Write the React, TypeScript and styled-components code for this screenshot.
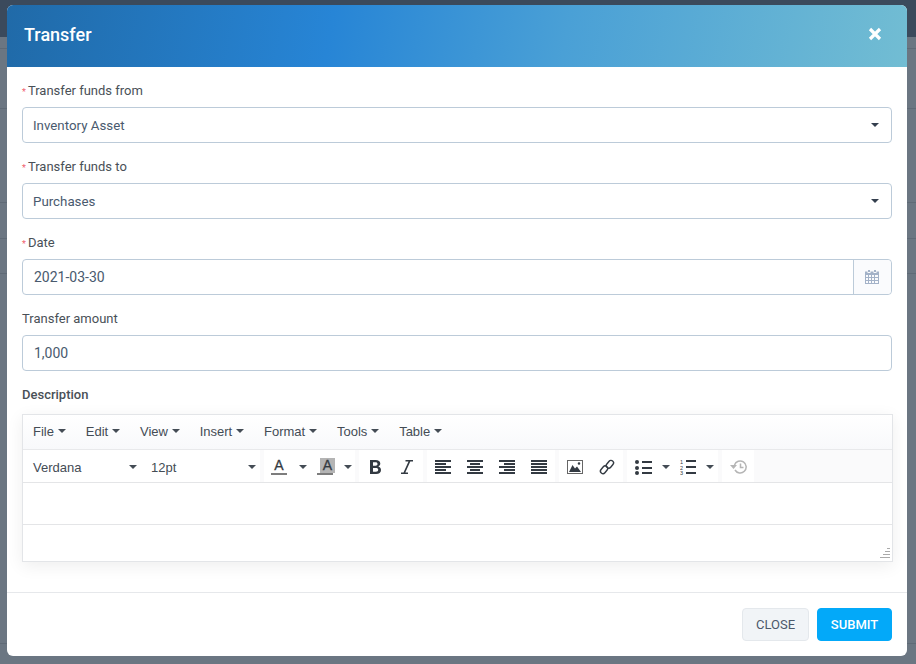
import React from 'react';
import styled, { createGlobalStyle } from 'styled-components';

const Global = createGlobalStyle`
  html, body { margin: 0; padding: 0; height: 100%; }
  body { font-family: Roboto, "Liberation Sans", sans-serif; background: #6b7682; overflow: hidden; }
`;

const Page = styled.div`
  position: relative;
  width: 916px;
  height: 664px;
  overflow: hidden;
`;

const TopBar = styled.div`
  height: 37px;
  background: #3b4a5c;
`;

const BackRow = styled.div<{ $h: number }>`
  height: ${p => p.$h}px;
  box-sizing: border-box;
  border-bottom: 1px solid #5f6a76;
  background: #6b7682;
`;

const Modal = styled.div`
  position: absolute;
  left: 7px;
  top: 5px;
  width: 900px;
  height: 651px;
  background: #fff;
  border-radius: 6px;
  overflow: hidden;
  display: flex;
  flex-direction: column;
`;

const Header = styled.div`
  height: 62px;
  flex: none;
  display: flex;
  align-items: center;
  justify-content: space-between;
  padding: 0 25px 4px 17px;
  box-sizing: border-box;
  background: linear-gradient(100deg, #206aa8 0%, #2785d6 36%, #4aa0d6 62%, #72bdd3 100%);
`;

const Title = styled.h2`
  margin: 0;
  font-size: 18px;
  font-weight: 500;
  color: #fff;
`;

const Body = styled.div`
  flex: 1;
  padding: 15px 15px 0;
  display: flex;
  flex-direction: column;
`;

const Field = styled.div`
  height: 76px;
  flex: none;
`;

const Label = styled.div<{ $bold?: boolean }>`
  height: 25px;
  padding-top: 1px;
  box-sizing: border-box;
  font-size: 13px;
  line-height: 16px;
  color: #495057;
  font-weight: ${p => (p.$bold ? 500 : 400)};
`;

const Star = styled.span`
  color: #f0616e;
  font-size: 9px;
  margin-right: 2px;
`;

const Control = styled.div<{ $pad?: number; $size?: number }>`
  width: 870px;
  height: 36px;
  box-sizing: border-box;
  border: 1px solid #bccbd9;
  border-radius: 4px;
  display: flex;
  align-items: center;
  justify-content: space-between;
  padding-left: ${p => p.$pad ?? 10}px;
  font-size: ${p => p.$size ?? 13.3}px;
  color: #495a6e;
  background: #fff;
`;

const SelectCaret = styled.span`
  width: 0;
  height: 0;
  margin-right: 12px;
  border-left: 4px solid transparent;
  border-right: 4px solid transparent;
  border-top: 4px solid #343f4e;
`;

const Addon = styled.div`
  width: 38px;
  height: 34px;
  box-sizing: border-box;
  padding-right: 1px;
  border-left: 1px solid #bccbd9;
  border-radius: 0 4px 4px 0;
  background: #fafbfd;
  display: flex;
  align-items: center;
  justify-content: center;
`;

const Editor = styled.div`
  width: 871px;
  height: 148px;
  box-sizing: border-box;
  border: 1px solid #e3e5e8;
  box-shadow: 0 4px 16px rgba(0, 0, 0, 0.07);
  display: flex;
  flex-direction: column;
  background: #fff;
  margin-top: 3px;
  font-family: "Liberation Sans", Arial, sans-serif;
`;

const MenuBar = styled.div`
  height: 35px;
  flex: none;
  box-sizing: border-box;
  display: flex;
  align-items: center;
  padding: 0 0 2px 10px;
  gap: 19.8px;
  border-bottom: 1px solid #e8e9eb;
  background: linear-gradient(#fff, #f8f9fb);
  font-size: 13px;
  color: #444c55;
`;

const MenuItem = styled.span`
  display: inline-flex;
  align-items: center;
  gap: 4px;
`;

const SmallCaret = styled.span`
  width: 0;
  height: 0;
  border-left: 4px solid transparent;
  border-right: 4px solid transparent;
  border-top: 4px solid #444c55;
`;

const ToolBar = styled.div`
  height: 33px;
  flex: none;
  box-sizing: border-box;
  display: flex;
  gap: 4px;
  border-bottom: 1px solid #e4e5e7;
  background: #fafafb;
`;

const Group = styled.div<{ $end?: number }>`
  display: flex;
  height: 32px;
  align-items: center;
  padding-right: ${p => p.$end ?? 0}px;
  background: #fff;
`;

const FontPick = styled.div<{ $w: number }>`
  width: ${p => p.$w}px;
  height: 32px;
  box-sizing: border-box;
  padding: 2px 4px 0 10px;
  display: flex;
  align-items: center;
  justify-content: space-between;
  font-size: 13px;
  color: #444c55;
`;

const Tool = styled.div<{ $w?: number }>`
  width: ${p => p.$w ?? 32}px;
  height: 32px;
  box-sizing: border-box;
  padding-top: 2px;
  display: flex;
  align-items: center;
  justify-content: center;
  flex: none;
`;

const EditArea = styled.div`
  height: 41px;
  flex: none;
  border-bottom: 1px solid #e4e5e7;
`;

const StatusBar = styled.div`
  flex: 1;
  display: flex;
  align-items: flex-end;
  justify-content: flex-end;
  padding: 0 2px 3px 0;
  background: #fff;
`;

const Footer = styled.div`
  height: 64px;
  flex: none;
  box-sizing: border-box;
  border-top: 1px solid #e6e8eb;
  display: flex;
  justify-content: flex-end;
  align-items: flex-start;
  gap: 8px;
  padding: 15px 15px 0 0;
`;

const Btn = styled.button<{ $primary?: boolean }>`
  height: 33px;
  width: ${p => (p.$primary ? 75 : 67)}px;
  box-sizing: border-box;
  border-radius: 4px;
  padding: 0;
  font-family: Roboto, sans-serif;
  font-size: 13px;
  font-weight: ${p => (p.$primary ? 500 : 400)};
  border: 1px solid ${p => (p.$primary ? '#03a9f9' : '#e4e8ec')};
  background: ${p => (p.$primary ? '#03a9f9' : '#f1f4f7')};
  color: ${p => (p.$primary ? '#fff' : '#4c596b')};
`;

const InkIcon = styled.svg`
  display: block;
  fill: #333a42;
`;

const Close = () => (
  <svg width="14" height="14" viewBox="0 0 14 14">
    <path d="M2 2l10 10M12 2L2 12" stroke="#fff" strokeWidth="3.2" />
  </svg>
);

const Calendar = () => (
  <svg width="14" height="14" viewBox="0 0 14 14" fill="#a3b2c8">
    <path d="M3 0h2v2H3zM9 0h2v2H9z" />
    <path fillRule="evenodd" d="M0 1.500h2.500V3h3V1.500h3V3h3V1.500H14V14H0zM1 5v2h2V5zm3 0v2h2V5zm3 0v2h2V5zm3 0v2h3V5zM1 8v2h2V8zm3 0v2h2V8zm3 0v2h2V8zm3 0v2h3V8zM1 11v2h2v-2zm3 0v2h2v-2zm3 0v2h2v-2zm3 0v2h3v-2z" />
  </svg>
);

const TextColor = () => (
  <svg width="16" height="18" viewBox="0 0 16 18">
    <text x="8" y="12" textAnchor="middle" fontFamily="Liberation Sans, sans-serif" fontSize="14" fill="#333a42" stroke="#333a42" strokeWidth="0.3">A</text>
    <rect x="0" y="15" width="16" height="2" fill="#7d7d7d" />
  </svg>
);

const BackColor = () => (
  <svg width="18" height="18" viewBox="0 0 18 18">
    <rect x="3" y="0" width="15" height="15" fill="#b4b4b4" />
    <text x="10.500" y="12" textAnchor="middle" fontFamily="Liberation Sans, sans-serif" fontSize="14" fill="#333a42" stroke="#333a42" strokeWidth="0.3">A</text>
    <rect x="0" y="15" width="16" height="2" fill="#7d7d7d" />
  </svg>
);

const Bold = () => (
  <InkIcon width="11" height="14" viewBox="0 0 11 14">
    <path fillRule="evenodd" d="M0 0h5.500C8.500 0 10.300 1.300 10.300 3.500c0 1.400-.8 2.500-2 3 1.600.4 2.700 1.600 2.700 3.500 0 2.500-1.900 4-4.800 4H0zM3 2.300v3.400h2.500c1.300 0 2-.6 2-1.700s-.7-1.700-2-1.700zM3 8v3.700h3c1.400 0 2.200-.7 2.200-1.900S7.400 8 6 8z" />
  </InkIcon>
);

const Italic = () => (
  <InkIcon width="12" height="14" viewBox="0 0 12 14">
    <path d="M4.500 0H12v1.500H9.300L4.300 12.500H7V14H0v-1.500h2.500L7.500 1.500H4.500z" />
  </InkIcon>
);

const aligns: Record<string, number[][]> = {
  left: [[0, 16], [0, 11], [0, 16], [0, 11], [0, 16]],
  center: [[0, 16], [3, 10], [0, 16], [3, 10], [0, 16]],
  right: [[0, 16], [5, 11], [0, 16], [5, 11], [0, 16]],
  justify: [[0, 16], [0, 16], [0, 16], [0, 16], [0, 16]],
};

const Align = ({ kind }: { kind: string }) => (
  <InkIcon width="16" height="14" viewBox="0 0 16 14">
    {aligns[kind].map(([x, w], i) => (
      <rect key={i} x={x} y={i * 3} width={w} height="2" />
    ))}
  </InkIcon>
);

const ImageIcon = () => (
  <InkIcon width="16" height="14" viewBox="0 0 16 14">
    <path fillRule="evenodd" d="M0 0h16v14H0zm1 1v12h14V1z" fill="#666" />
    <path d="M2 12l3.500-7 2.500 3.500 2-2 4 5.500zM12 2.200a1.300 1.300 0 1 1 0 2.600 1.300 1.300 0 0 1 0-2.600z" />
  </InkIcon>
);

const LinkIcon = () => (
  <svg width="16" height="16" viewBox="0 0 16 16" fill="none" stroke="#333a42" strokeWidth="1.400">
    <rect x="2.600" y="6.500" width="5" height="8.500" rx="2.500" transform="rotate(40 5.100 10.750)" />
    <rect x="8.400" y="1" width="5" height="8.500" rx="2.500" transform="rotate(40 10.900 5.250)" />
  </svg>
);

const Bullets = () => (
  <InkIcon width="17" height="15" viewBox="0 0 17 15">
    <circle cx="2" cy="2" r="2" />
    <circle cx="2" cy="8" r="2" />
    <circle cx="2" cy="13" r="2" />
    <rect x="7" y="1" width="10" height="2" />
    <rect x="7" y="7" width="10" height="2" />
    <rect x="7" y="12" width="10" height="2" />
  </InkIcon>
);

const Numbers = () => (
  <InkIcon width="16" height="16" viewBox="0 0 16 16">
    <text x="0" y="5" fontSize="5.500" fontFamily="Liberation Sans, sans-serif">1</text>
    <text x="0" y="10.500" fontSize="5.500" fontFamily="Liberation Sans, sans-serif">2</text>
    <text x="0" y="16" fontSize="5.500" fontFamily="Liberation Sans, sans-serif">3</text>
    <rect x="6" y="1" width="10" height="2" />
    <rect x="6" y="7" width="10" height="2" />
    <rect x="6" y="13" width="10" height="2" />
  </InkIcon>
);

const History = () => (
  <svg width="17" height="14" viewBox="0 0 17 14" fill="none" stroke="#b5b5b5" strokeWidth="1.500">
    <path d="M4.500 5a6 6 0 1 1 .5 5" />
    <path d="M10.500 3.500V7.500h3" />
    <path d="M0 5h7L3.500 9z" fill="#b5b5b5" stroke="none" />
  </svg>
);

const Grip = () => (
  <svg width="10" height="10" viewBox="0 0 10 10" fill="#aaa">
    <rect x="7" y="0" width="3" height="1" />
    <rect x="5" y="3" width="5" height="1" />
    <rect x="3" y="6" width="7" height="1" />
    <rect x="0" y="9" width="10" height="1" />
  </svg>
);

const menus = ['File', 'Edit', 'View', 'Insert', 'Format', 'Tools', 'Table'];

export default function App() {
  return (
    <Page>
      <Global />
      <TopBar />
      <BackRow $h={12} />
      <BackRow $h={60} />
      <BackRow $h={94} />
      <BackRow $h={36} />
      <BackRow $h={35} />
      <BackRow $h={370} />
      <Modal>
        <Header>
          <Title>Transfer</Title>
          <Close />
        </Header>
        <Body>
          <Field>
            <Label><Star>*</Star>Transfer funds from</Label>
            <Control>Inventory Asset<SelectCaret /></Control>
          </Field>
          <Field>
            <Label><Star>*</Star>Transfer funds to</Label>
            <Control>Purchases<SelectCaret /></Control>
          </Field>
          <Field>
            <Label><Star>*</Star>Date</Label>
            <Control $pad={11} $size={14}>2021-03-30<Addon><Calendar /></Addon></Control>
          </Field>
          <Field>
            <Label>Transfer amount</Label>
            <Control $pad={11} $size={14}>1,000</Control>
          </Field>
          <Label $bold>Description</Label>
          <Editor>
            <MenuBar>
              {menus.map(m => (
                <MenuItem key={m}>{m}<SmallCaret /></MenuItem>
              ))}
            </MenuBar>
            <ToolBar>
              <Group>
                <FontPick $w={118}>Verdana<SmallCaret /></FontPick>
                <FontPick $w={119}>12pt<SmallCaret /></FontPick>
              </Group>
              <Group>
                <Tool $w={30}><TextColor /></Tool>
                <Tool $w={18}><SmallCaret /></Tool>
                <Tool $w={28}><BackColor /></Tool>
                <Tool $w={15}><SmallCaret /></Tool>
              </Group>
              <Group>
                <Tool><Bold /></Tool>
                <Tool><Italic /></Tool>
              </Group>
              <Group>
                <Tool><Align kind="left" /></Tool>
                <Tool><Align kind="center" /></Tool>
                <Tool><Align kind="right" /></Tool>
                <Tool><Align kind="justify" /></Tool>
              </Group>
              <Group>
                <Tool><ImageIcon /></Tool>
                <Tool><LinkIcon /></Tool>
              </Group>
              <Group $end={2}>
                <Tool><Bullets /></Tool>
                <Tool $w={13}><SmallCaret /></Tool>
                <Tool><Numbers /></Tool>
                <Tool $w={12}><SmallCaret /></Tool>
              </Group>
              <Group>
                <Tool><History /></Tool>
              </Group>
            </ToolBar>
            <EditArea />
            <StatusBar><Grip /></StatusBar>
          </Editor>
        </Body>
        <Footer>
          <Btn>CLOSE</Btn>
          <Btn $primary>SUBMIT</Btn>
        </Footer>
      </Modal>
    </Page>
  );
}
